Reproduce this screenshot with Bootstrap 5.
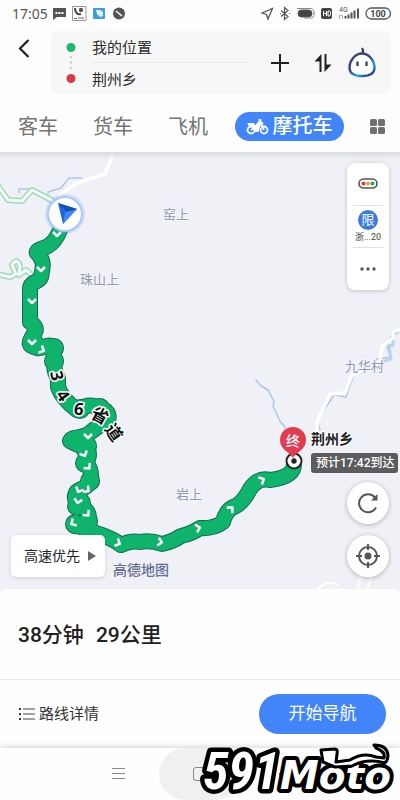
<!DOCTYPE html>
<html lang="zh-CN">
<head>
<meta charset="utf-8">
<meta name="viewport" content="width=device-width, initial-scale=1">
<title>摩托车路线</title>
<link href="https://cdn.jsdelivr.net/npm/bootstrap@5.3.0/dist/css/bootstrap.min.css" rel="stylesheet">
<style>
body{font-family:Roboto,"Noto Sans CJK SC",sans-serif;color:#222;background:#fdfdfd}
svg{display:block;flex:none}
button svg{margin:auto}
.status{height:31px;padding:0 8px 4px 12px}
.clock{font:14px/20px "Noto Sans",sans-serif;color:#555}
.search{margin-right:9px}
.back{flex:none;width:51px;padding:7px 0 0 18px}
.stops{background:#f7f7f8;border-radius:8px;height:63px;padding-right:14px}
.stops input{height:31px;font-size:15px;color:#2c2c2c;padding:0}
.stops input:focus{box-shadow:none}
.stops .first{border-bottom:1px solid #e7e7e8}
.swap{margin:0 14px 0 23px}
.modes{height:58px;padding:6px 15px 0 18px;font-size:20px;line-height:29px}
.modes a{color:#747474}
.plain{gap:35px;padding-top:2px}
.modes .current{background:#4285f8;color:#fff;font-weight:500;padding:0 11px}
.mapview{background:#eff1f6;min-height:400px;z-index:0}
.topshade{height:7px;background:linear-gradient(#d9dadd,#eff1f600);top:0}
.place{font-size:13px;fill:#8f98b5;paint-order:stroke;stroke:#f6f7fa;stroke-width:2px}
.roadno{font:bold 17px "Noto Sans","Noto Sans CJK SC",sans-serif;fill:#111;stroke:#fff;stroke-width:3px;paint-order:stroke;text-anchor:middle}
.tools{top:11px;right:11px;width:42px;height:127px;border-radius:8px;box-shadow:0 1px 5px #0003}
.tools button{margin:0 6px;flex:1 1 0}
.limit{width:20px;height:20px;background:#3d7bdb;font-size:13px;line-height:20px}
.region{font-size:9px;line-height:14px;color:#444}
.rounds{right:11px;bottom:14px;gap:11px}
.rounds button{width:42px;height:42px;box-shadow:0 1px 5px #0004}
.prefer{left:11px;bottom:14px;height:42px;padding:0 9px 0 13px;border-radius:5px;font-size:14px;box-shadow:0 1px 4px #0002}
.sheet{border-radius:8px 8px 0 0;margin-top:-2px;background:#fefefe;z-index:1}
.totals{height:91px;font-size:21px;font-weight:500;gap:12px;padding:4px 18px 0;border-bottom:1px solid #e8e8e8}
.actions{height:68px;padding:0 14px 0 19px}
.details{font-size:15px;color:#333}
.go{background:#4285f8;width:127px;height:40px;font-size:17px;padding:0}
.go:hover{background:#3478ef}
.sysnav{height:52px;box-shadow:0 -2px 5px #0002;background:#fefefe;z-index:2}
.sysnav button{width:82px}
.sysnav .home{background:#f0f0f0;border-radius:27px}
.brand{right:0;bottom:0;z-index:3;pointer-events:none}
.brand text{fill:#fff;paint-order:stroke;stroke:#000;stroke-linejoin:round;font-weight:bold;font-style:italic}
.digits{font-family:"Roboto Condensed",Roboto,sans-serif;font-size:52px;stroke-width:9px}
.word{font-family:"DejaVu Sans",sans-serif;font-size:39px;stroke-width:8px}
</style>
<script src="https://cdn.jsdelivr.net/npm/bootstrap@5.3.0/dist/js/bootstrap.bundle.min.js"></script>
</head>
<body>
<div class="d-flex flex-column min-vh-100 position-relative">
<header>
  <div class="status d-flex align-items-center justify-content-between">
    <div class="d-flex align-items-center gap-1">
      <span class="clock">17:05</span>
      <svg width="74" height="18" viewBox="53 5 74 18">
        <path d="M54 8h13v9H58l-4 3z" fill="#555"/><path d="M56.500 13h8" stroke="#fff" stroke-width="2" stroke-dasharray="2 1"/>
        <path d="M73.500 6.500h13.500v14H73.500z" fill="#fff" stroke="#999"/><path d="M76 8c0 5 3 7 6 6" fill="none" stroke="#444" stroke-width="2"/><path d="M75 18.500h3m1-.5h6" fill="none" stroke="#666"/><circle cx="82" cy="10" r="2.200" fill="#555"/>
        <rect x="94" y="8" width="12" height="11" rx="1" fill="#3f9edc"/><path d="M97 10h4l3 2v4l-3 1-3-3z" fill="#dff2ff"/>
        <circle cx="120" cy="13.500" r="6" fill="#555"/><path d="M117 11l6 5" stroke="#fff" stroke-width="1.500"/>
      </svg>
    </div>
    <svg width="132" height="18" viewBox="258 5 132 18" fill="none" stroke="#555">
      <path d="M260 13l10.500-4.500-4.500 10.500-1.500-4.500z" stroke-width="1.300"/>
      <path d="M279 10.500l7 6-3.500 3V7.500l3.500 3-7 6M278 13.500h1m8 0h1" stroke-width="1.200"/>
      <rect x="296" y="10" width="14" height="7" rx="3.500" fill="#444"/><path d="M295 8.500h13a4 5 0 0 1 2 9.500h-8" stroke="#888"/>
      <rect x="319" y="8" width="11" height="11" rx="2" fill="#444" stroke="none"/>
      <path d="M321.500 11v5m3-5v5m-3-2.500h3m1.500-2.500v5h1q1.500 0 1.500-1.500v-2q0-1.500-1.500-1.500z" stroke="#fff"/>
      <path d="M343.500 16v2.500m3-4v4m3-6v6m3-8v8m3.500-10v10" stroke-width="2"/>
      <text x="337" y="12" font-size="7" fill="#555" stroke="none">4G</text><path d="M337.500 15v4m3 0v-3.500h-2" stroke="#aaa"/>
      <rect x="364" y="8" width="24.500" height="11" rx="5.500" stroke-width="1.300"/>
      <text x="376" y="17" font-size="9" font-weight="bold" text-anchor="middle" fill="#444" stroke="none">100</text>
    </svg>
  </div>
  <div class="search d-flex">
    <button class="back btn border-0 d-flex align-items-start rounded-0" aria-label="返回"><svg class="m-0" width="12" height="21" viewBox="0 0 12 21"><path d="M10.500 2L2 10.500l8.500 8.500" fill="none" stroke="#222" stroke-width="2.200"/></svg></button>
    <div class="stops d-flex flex-grow-1 align-items-center">
      <svg width="41" height="63" viewBox="0 0 41 63"><circle cx="20" cy="16.500" r="4.500" fill="#23b76b"/><g fill="#cfcfcf"><circle cx="20" cy="26" r="1.300"/><circle cx="20" cy="31.500" r="1.300"/><circle cx="20" cy="37" r="1.300"/></g><circle cx="20" cy="47.500" r="4.500" fill="#d83b40"/></svg>
      <form class="flex-grow-1">
        <input class="form-control border-0 bg-transparent rounded-0" aria-label="起点" value="我的位置">
        <div class="first"></div>
        <input class="form-control border-0 bg-transparent rounded-0" aria-label="终点" value="荆州乡">
      </form>
      <button class="btn border-0 p-0 ms-4" aria-label="添加途经点"><svg width="20" height="20" viewBox="0 0 20 20"><path d="M10 1v18M1 10h18" stroke="#222" stroke-width="2"/></svg></button>
      <button class="swap btn border-0 p-0" aria-label="交换起终点"><svg width="20" height="20" viewBox="0 0 20 20"><path d="M8.500 19V1L1.500 8.500h5V19zM11.500 1v18l7-7.500h-5V1z" fill="#222"/></svg></button>
      <button class="btn border-0 p-0" aria-label="语音助手"><svg width="30" height="32" viewBox="0 0 30 32">
        <defs><linearGradient id="ring" x1="0" y1="0" x2=".7" y2="1"><stop stop-color="#444a61"/><stop offset=".5" stop-color="#363f92"/><stop offset=".8" stop-color="#16acd0"/><stop offset="1" stop-color="#2446a0"/></linearGradient></defs>
        <path d="M15 6.500C8 6.500 2.500 14 2.500 20.500c0 6 5 8.500 12.500 8.500s12.500-2.500 12.500-8.500C27.500 14 22 6.500 15 6.500z" fill="#fff" stroke="url(#ring)" stroke-width="2.300"/><path d="M15 6q2-2 0-5M10.500 14.500v4.500m9-4.500v4.500" fill="none" stroke="#343a4c" stroke-width="2.200"/></svg></button>
    </div>
  </div>
  <nav class="modes d-flex justify-content-between align-items-center" aria-label="出行方式">
    <div class="plain d-flex">
      <a class="text-decoration-none" href="#car">客车</a>
      <a class="text-decoration-none" href="#truck">货车</a>
      <a class="text-decoration-none" href="#plane">飞机</a>
    </div>
    <a class="current rounded-pill text-decoration-none d-flex align-items-center gap-1" href="#moto" aria-current="page">
      <svg width="23" height="17" viewBox="0 0 22 17"><g fill="none" stroke="#fff" stroke-width="1.800"><circle cx="4.500" cy="12" r="3.500"/><circle cx="17.500" cy="12" r="3.500"/><path d="M13 3l4.500 9M12 1.500l3 1M4.500 12l5-3"/></g><path d="M1 5h6l2 2 4-5 4 3-1 2-2 0-2 7H8l-2-5-4-1z" fill="#fff"/></svg>摩托车</a>
    <button class="btn border-0 p-0" aria-label="全部出行方式"><svg width="15" height="15" viewBox="0 0 15 15" fill="#707070"><rect width="7" height="7" rx="1.500"/><rect x="8" width="7" height="7" rx="1.500"/><rect y="8" width="7" height="7" rx="1.500"/><rect x="8" y="8" width="7" height="7" rx="1.500"/></svg></button>
  </nav>
</header>

<main class="mapview position-relative flex-grow-1 overflow-hidden">
  <svg class="position-absolute w-100 h-100" viewBox="0 152 400 439" preserveAspectRatio="xMidYMid slice" fill="none" stroke-linejoin="round" stroke-linecap="round">
    <defs>
      <path id="route" d="M60 230C57 238 53 243 48 246S35 250 37 253C46 261 42 270 41 277C38 284 29 280 30 291V322Q38 327 35 332C27 344 28 346 37 348C44 350 48 342 52 347Q54 353 55 363Q53 370 58 378V387Q62 399 77 410Q88 403 98 407C111 411 111 419 104 424Q96 427 91 432C82 440 73 435 70 441Q76 444 86 448Q92 454 86 462Q92 470 91 479Q90 486 81 489C69 496 77 504 84 508C92 515 90 525 80 526C69 528 77 520 74 524Q90 531 102 535Q115 540 121 545Q131 540 140 542Q150 540 162 544Q172 542 181 536Q191 534 200 528Q214 529 223 522Q226 509 236 506Q244 501 250 489Q258 477 270 480Q294 477 294 464"/>
      <path id="curves" d="M54 348h.1M34 343h.1M54 361h.1M100 408h.1M80 409h.1M87 446h.1M86 450h.1M85 463h.1M90 481h.1M78 493h.1M81 503h.1M77 506h.1M88 521h.1M86 525h.1M75 524h.1"/>
      <path id="branch" d="M-4 183L8 200 22 201 32 190 59 204M-3 274L10 277 16 274 12 265Q17 257 20 266L19 275 26 270 33 276"/>
      <path id="chevron" d="M-4-2L0 2 4-2"/>
    </defs>
    <g stroke="#aec6ec" stroke-width="1.500"><path d="M19 193v-4h11M48 194v-2l13-4 8-10h13"/><path d="M256 380l5 6 7 4 6 11-1 5 7 15 5 6 1 7M320 430l-3-10 17-25 12 2 8-23 11-2 12-13 14-2-4-10 5-13"/></g>
    <g stroke="#bad1f2" stroke-width="3"><path d="M398 332l-5 3v10l-4 1 2 13-13 4"/></g>
    <g stroke="#fff" stroke-width="3.500"><path d="M115 150l-10 24-28 9-17 12"/><path d="M403 328l-10 4v6l-11 9-2 14-8 6-20 8-7 18-15 1-13 28v11"/></g>
    <g stroke="#fff" stroke-width="2"><path d="M318 589q10-10 20-4M357 591l4-16M367 591l4-14"/></g>
    <use href="#branch" stroke="#9fdabb" stroke-width="6"/><use href="#branch" stroke="#f7fcfa" stroke-width="3"/>
    <use href="#route" stroke="#176b50" stroke-width="16"/><use href="#curves" stroke="#176b50" stroke-width="20"/>
    <use href="#route" stroke="#0eb46c" stroke-width="14"/><use href="#curves" stroke="#0eb46c" stroke-width="18"/>
    <g stroke="#fff" stroke-width="2.500" stroke-linecap="butt">
      <use href="#chevron" transform="translate(57 234)"/><use href="#chevron" transform="translate(41 269)"/><use href="#chevron" transform="translate(32 301)"/><use href="#chevron" transform="translate(32 342)"/><use href="#chevron" transform="translate(42 350) rotate(-65)"/><use href="#chevron" transform="translate(88 436)"/><use href="#chevron" transform="translate(84 454) rotate(-25)"/><use href="#chevron" transform="translate(88 467) rotate(-40)"/><use href="#chevron" transform="translate(79 490) rotate(25)"/><use href="#chevron" transform="translate(87 490) rotate(-50)"/><use href="#chevron" transform="translate(78 501) rotate(10)"/><use href="#chevron" transform="translate(87 514) rotate(-40)"/><use href="#chevron" transform="translate(73 523) rotate(60)"/><use href="#chevron" transform="translate(118 543) rotate(-65)"/><use href="#chevron" transform="translate(160 542) rotate(-80)"/><use href="#chevron" transform="translate(198 528) rotate(-105)"/><use href="#chevron" transform="translate(231 509) rotate(-135)"/><use href="#chevron" transform="translate(262 480) rotate(-115)"/>
    </g>
    <text class="roadno" transform="translate(51 377) rotate(78)">3</text>
    <text class="roadno" transform="translate(58 399) rotate(55)">4</text>
    <text class="roadno" transform="translate(78 415) rotate(8)">6</text>
    <text class="roadno" transform="translate(97 421) rotate(28)">省</text>
    <text class="roadno" transform="translate(109 436) rotate(55)">道</text>
    <text class="place" x="163" y="219">窑上</text><text class="place" x="80" y="284">珠山上</text><text class="place" x="345" y="371">九华村</text><text class="place" x="176" y="499">岩上</text>
    <text x="113" y="575" font-size="14" font-weight="500" fill="#66708f">高德地图</text>
    <circle cx="65" cy="214" r="20" fill="#79a6f5" opacity=".25"/><circle cx="65" cy="214" r="17" fill="#fff" stroke="#acc8f7" stroke-width="2"/>
    <path d="M58 203l19 6-14 15z" fill="#1d62d9"/><path d="M58 203l8 9 11-3-14 15 2-12z" fill="#398bf6"/><path d="M58 203l8 9 11-3z" fill="#1550b5"/>
    <circle cx="294" cy="461" r="7.500" fill="#fff" stroke="#222" stroke-width="2"/>
    <path d="M293 458c-3-6-13-8-13-18a13 13 0 0 1 26 0c0 10-10 12-13 18z" fill="#e33b50"/><circle cx="294" cy="461" r="2.700" fill="#222"/>
    <text x="293" y="446" font-size="14" font-weight="500" text-anchor="middle" fill="#fff">终</text>
    <text x="311" y="444" font-size="14" font-weight="bold" fill="#222" stroke="#fff" stroke-width="2" paint-order="stroke">荆州乡</text>
    <rect x="311" y="453" width="87" height="20" rx="3" fill="#5c5c5e"/><text x="316" y="467" font-size="12" font-weight="500" fill="#fff">预计17:42到达</text>
  </svg>
  <div class="topshade position-absolute w-100"></div>
  <div class="tools position-absolute bg-white d-flex flex-column">
    <button class="btn border-0 p-0 rounded-0" aria-label="路况"><svg width="20" height="11" viewBox="0 0 20 11"><rect x="1" y="1" width="18" height="9" rx="4.500" fill="#fff" stroke="#555" stroke-width="1.600"/><circle cx="5.500" cy="5.500" r="2" fill="#d93c3c"/><circle cx="10" cy="5.500" r="2" fill="#e5a12f"/><circle cx="14.500" cy="5.500" r="2" fill="#28a756"/></svg></button>
    <button class="btn border-0 border-top border-bottom p-0 rounded-0 d-flex flex-column align-items-center justify-content-center"><span class="limit rounded-circle text-white">限</span><span class="region text-nowrap">浙...20</span></button>
    <button class="btn border-0 p-0 rounded-0" aria-label="更多"><svg width="16" height="4" viewBox="0 0 16 4" fill="#555"><circle cx="2" cy="2" r="1.700"/><circle cx="8" cy="2" r="1.700"/><circle cx="14" cy="2" r="1.700"/></svg></button>
  </div>
  <div class="rounds position-absolute d-flex flex-column">
    <button class="btn bg-white border-0 p-0 rounded-circle" aria-label="刷新"><svg width="22" height="22" viewBox="0 0 22 22"><path d="M18 5.500A9 9 0 1 0 19 15.500" fill="none" stroke="#555" stroke-width="2"/><path d="M20.500 2v6.500H14z" fill="#555"/></svg></button>
    <button class="btn bg-white border-0 p-0 rounded-circle" aria-label="定位"><svg width="24" height="24" viewBox="0 0 24 24" fill="none" stroke="#555" stroke-width="2"><circle cx="12" cy="12" r="9"/><circle cx="12" cy="12" r="3.500" fill="#555" stroke="none"/><path d="M12 0v6m0 12v6M0 12h6m12 0h6"/></svg></button>
  </div>
  <button class="prefer btn bg-white border-0 position-absolute d-flex align-items-center gap-2">高速优先<svg width="8" height="10" viewBox="0 0 8 10"><path d="M0 0l8 5-8 5z" fill="#666"/></svg></button>
</main>

<section class="sheet position-relative">
  <div class="totals d-flex align-items-center"><span>38分钟</span><span>29公里</span></div>
  <div class="actions d-flex align-items-center justify-content-between">
    <button class="details btn border-0 p-0 d-flex align-items-center gap-1"><svg width="16" height="14" viewBox="0 0 16 14"><path d="M4 2h12M4 7h12M4 12h12" stroke="#444" stroke-width="1.200"/><path d="M0 2h2M0 7h2M0 12h2" stroke="#333" stroke-width="2"/></svg>路线详情</button>
    <button class="go btn text-white border-0 rounded-pill">开始导航</button>
  </div>
</section>
<footer class="sysnav d-flex justify-content-center position-relative">
  <button class="btn border-0 p-0" aria-label="菜单"><svg width="13" height="12" viewBox="0 0 13 12"><path d="M0 .5h13M0 5.500h13M0 10.500h13" stroke="#888"/></svg></button>
  <button class="home btn border-0 p-0" aria-label="主屏幕"><svg width="14" height="14" viewBox="0 0 14 14"><rect x=".5" y=".5" width="13" height="13" rx="2.500" fill="none" stroke="#888"/></svg></button>
  <button class="btn border-0 p-0" aria-label="返回上一页"><svg width="8" height="14" viewBox="0 0 8 14"><path d="M7 1L1 7l6 6" fill="none" stroke="#777"/></svg></button>
</footer>
<svg class="brand position-absolute" width="202" height="80" viewBox="198 720 202 80" role="img" aria-label="591Moto">
  <text class="digits" x="203" y="789">591</text>
  <text class="word" x="280" y="789">Moto</text>
  <path d="M321 750l14-1q3 0 2 5l-1 8 14-2q13-8 26-3l8 1q2-6-8-10l-2-3q13 0 14 10 0 5-3 8-18-5-33 3l-17 1-12-5z" fill="#fff" stroke="#000" stroke-width="3" stroke-linejoin="round"/>
</svg>
</div>
</body>
</html>
